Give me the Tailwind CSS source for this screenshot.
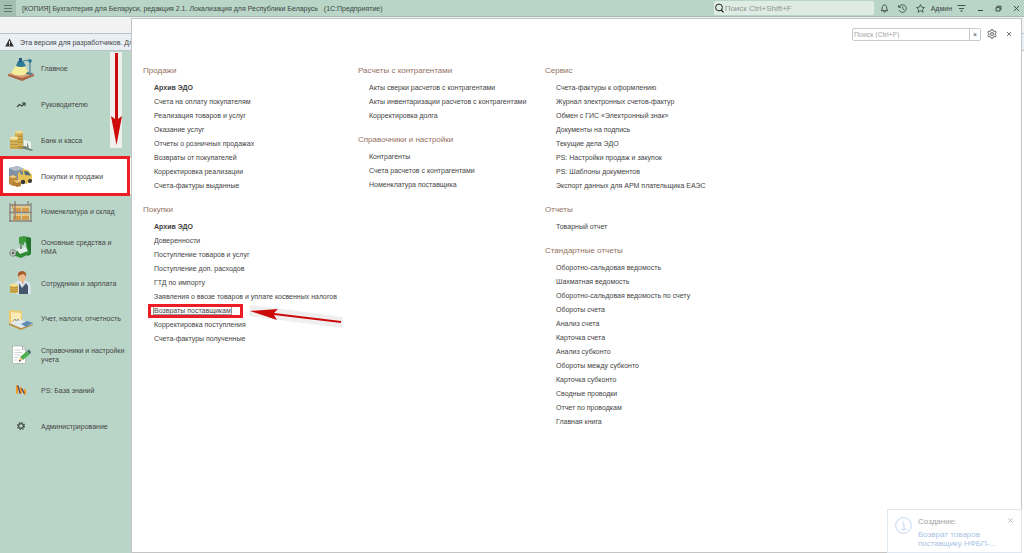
<!DOCTYPE html>
<html lang="ru">
<head>
  <meta charset="UTF-8">
  <meta name="viewport" content="width=device-width, initial-scale=1.0">
  <title>Бухгалтерия для Беларуси</title>
  <script src="https://cdn.jsdelivr.net/npm/@tailwindcss/browser@4"></script>
</head>
<body class="relative flex flex-col min-h-screen overflow-x-hidden bg-[#f2f2f2] font-['Liberation_Sans',Arial,sans-serif] text-[7px] leading-[9px] text-[#444]">

  <header class="flex items-center h-[17px] shrink-0 bg-[#b9d5c8] border-b border-[#a9b9b1] text-[#3c4541]">
    <button class="flex items-center justify-center w-4 h-4 bg-[#a3bfb1]" aria-label="Меню">
      <svg class="w-2 h-2" viewBox="0 0 8 8" stroke="#64756c" stroke-width="1"><path d="M0 1.5h8M0 4.5h8M0 7.5h8"/></svg>
    </button>
    <h1 class="ml-[6px] whitespace-pre">[КОПИЯ] Бухгалтерия для Беларуси, редакция 2.1. Локализация для Республики Беларусь   (1С:Предприятие)</h1>
    <label class="flex items-center ml-auto w-[160px] h-[14px] bg-[#dfece5] rounded-xs">
      <svg class="w-[10px] h-[10px] shrink-0" viewBox="0 0 10 10" fill="none" stroke="#222"><circle cx="5" cy="4.5" r="3.4"/><path d="M7.3 7l2.2 2.400" stroke-width="1.300"/></svg>
      <input type="text" class="w-full pl-px text-[8px] outline-none placeholder:text-[#8b9690]" placeholder="Поиск Ctrl+Shift+F" aria-label="Поиск">
    </label>
    <div class="flex items-center gap-[9px] ml-[6px]">
      <button aria-label="Уведомления"><svg class="w-[9px] h-[9px]" viewBox="0 0 9 9" fill="none" stroke="#34423b" stroke-width=".9"><path d="M1 6.700C2 6 2.200 5 2.300 3.500 2.400 1.800 3.200 1 4.500 1s2.100.8 2.200 2.500C6.800 5 7 6 8 6.700zM3.600 7.200a.9.9 0 0 0 1.800 0"/></svg></button>
      <button aria-label="История"><svg class="w-[9px] h-[9px]" viewBox="0 0 9 9" fill="none" stroke="#34423b" stroke-width=".8"><path d="M1 3a3.800 3.800 0 1 1 0 3M.6 1v2.300H3M4.700 2.300v2.500l1.800 1"/></svg></button>
      <button aria-label="Избранное"><svg class="w-[9px] h-[9px]" viewBox="0 0 9 9" fill="none" stroke="#34423b" stroke-width=".8" stroke-linejoin="round"><path d="M4.500.6l1.200 2.600 2.800.3-2.100 1.900.6 2.800-2.500-1.400L2 8.200l.6-2.800L.5 3.500l2.800-.3z"/></svg></button>
    </div>
    <button class="ml-[6px]">Админ</button>
    <button class="ml-[5px]" aria-label="Настройка"><svg class="w-[9px] h-[9px]" viewBox="0 0 9 9" fill="none" stroke="#34423b" stroke-width=".9"><path d="M.5 1.500h8M2 4.500h5"/><path d="M3 6.500h3L4.500 8z" fill="#34423b" stroke="none"/></svg></button>
    <div class="flex items-center gap-[11px] ml-[11px] mr-1">
      <button aria-label="Свернуть"><svg class="w-[7px] h-[7px]" viewBox="0 0 7 7" stroke="#34423b"><path d="M1 5.500h5"/></svg></button>
      <button aria-label="Развернуть"><svg class="w-[7px] h-[7px]" viewBox="0 0 7 7" fill="none" stroke="#34423b" stroke-width=".9"><path d="M2 2.500V1.200h4v3.200H5M1 2.700h4V6H1z"/></svg></button>
      <button aria-label="Закрыть"><svg class="w-[7px] h-[7px]" viewBox="0 0 7 7" stroke="#34423b" stroke-width=".9"><path d="M1 1l5 5M6 1L1 6"/></svg></button>
    </div>
  </header>

  <div class="flex flex-1">

    <!-- Разделы -->
    <aside class="flex flex-col w-[131px] shrink-0">
      <div class="h-4 bg-[#f2f2f2]"></div>
      <div class="flex items-center h-[18px] pl-[5px] gap-[6px] bg-[#e8eff5] border-y border-[#bcc2c6] whitespace-nowrap">
        <svg class="w-[9px] h-[9px] shrink-0" viewBox="0 0 9 9"><path d="M4.500.5L8.800 8.500H.2z" fill="#333"/><path d="M4.500 3v3M4.500 6.700v1" stroke="#fff" stroke-width=".9"/></svg>
        <p>Эта версия для разработчиков. Дл</p>
      </div>
      <div class="relative flex-1 bg-[#b9d5c8]">
        <nav class="grid auto-rows-fr h-[393px]">
          <a href="#" class="flex items-center pl-2 gap-[7px]">
            <svg class="w-[26px] h-6 shrink-0" viewBox="0 0 26 24"><path d="M0 17l13-5 13 5-12 6z" fill="#d9a07a"/><path d="M0 17l14 4 12-4v2l-12 5-14-5z" fill="#a8694a"/><path d="M9 7l-6 9q9 5 17 0L16 7z" fill="#f4ee9c"/><path d="M8 9l2-5h5l3 5q-5 2-10 0z" fill="#2f7898"/><path d="M11 1h3v4h-3z" fill="#245d7c"/><path d="M15 4l7-1v12" fill="none" stroke="#4e8296" stroke-width="1.200"/><circle cx="22" cy="4" r="1.800" fill="#2a7396"/><path d="M19 15l6 1-2 2-5-1z" fill="#487c8e"/></svg>
            <span>Главное</span>
          </a>
          <a href="#" class="flex items-center pl-2 gap-[7px]">
            <svg class="w-[26px] h-6 shrink-0" viewBox="0 0 26 24" fill="none" stroke="#3b443f" stroke-width="1.100"><path d="M9 14l2.500-2.500 2.500 1.500 3-3M14 10h3v3"/></svg>
            <span>Руководителю</span>
          </a>
          <a href="#" class="flex items-center pl-2 gap-[7px]">
            <svg class="w-[26px] h-6 shrink-0" viewBox="0 0 26 24"><path d="M7 4h8v15H7z" fill="#d0ab50"/><ellipse cx="11" cy="4" rx="4" ry="1.600" fill="#f1db93"/><path d="M2 10h8v11H2z" fill="#dab75b"/><path d="M2 13q4 2 8 0M2 16q4 2 8 0M2 19q4 2 8 0M10 8q3 1 5 0M10 11q3 1 5 0M10 14q3 1 5 0" fill="none" stroke="#9d7c2c" stroke-width=".7"/><ellipse cx="6" cy="10" rx="4" ry="1.600" fill="#f7e5a6"/><path d="M10 18h7v3h-7z" fill="#b99640"/><path d="M16 12l7 2v8l-7-4z" fill="#eef3ed"/><path d="M19 14l2 5-2 1z" fill="#76977f"/><path d="M13 20l4-2 8 4-1 1z" fill="#6c8175"/></svg>
            <span>Банк и касса</span>
          </a>
          <a href="#" class="relative flex items-center pl-2 gap-[7px] bg-white">
            <svg class="w-[26px] h-6 shrink-0" viewBox="0 0 26 24"><path d="M1 4l9-2 6 3v11H1z" fill="#8192a5"/><path d="M1 4l9-2 6 3-9 2z" fill="#b4bfcb"/><path d="M10 9l5-4 5 1 4 5v6l-6 3-8-4z" fill="#e6c354"/><path d="M16 7l4 .5 3 4-6-.5z" fill="#566e7c"/><path d="M12 7h3v4l-3-1z" fill="#738b96"/><circle cx="15" cy="18" r="2.200" fill="#353739"/><circle cx="22" cy="17" r="2" fill="#353739"/><path d="M1 13l4-2 4 2v8l-4 1-4-2z" fill="#c18b3e"/><path d="M1 13l4-2 4 2-4 1z" fill="#efcf88"/><path d="M5 17l4-1 4 2v4l-4 1-4-2z" fill="#b47e34"/><path d="M5 17l4-1 4 2-4 1z" fill="#e9c074"/></svg>
            <span>Покупки и продажи</span>
            <span class="absolute -inset-y-0.5 left-0 right-px border-3 border-[#ee1c25]"></span>
          </a>
          <a href="#" class="flex items-center pl-2 gap-[7px]">
            <svg class="w-[26px] h-6 shrink-0" viewBox="0 0 26 24"><path d="M4 5l4-2v4l-4 2zM5 6h8v6H5zM14 6h7v6h-7zM5 14h8v6H5zM14 14h7v6h-7z" fill="#d49b4b"/><path d="M5 6h8v2H5zM14 6h7v2h-7zM5 14h8v2H5zM14 14h7v2h-7z" fill="#edc27b"/><path d="M2 3v19M23 3v19M7 1v18M20 1v4M1 12.500h23M1 21h23M2 5h21" fill="none" stroke="#8d8277" stroke-width="1.300"/></svg>
            <span>Номенклатура и склад</span>
          </a>
          <a href="#" class="flex items-center pl-2 gap-[7px]">
            <svg class="w-[26px] h-6 shrink-0" viewBox="0 0 26 24"><path d="M11 2l5-1 7 2v16l-4 2-1-13-2-1v3l-5-1z" fill="#3c9a3d"/><path d="M18 2l5 1v16l-3 2z" fill="#23752b"/><path d="M10 15l8-2 5 5-10 5-8-3z" fill="#2f8a35"/><path d="M8 14l10-2 2 4-8 3z" fill="#dfeee5"/><path d="M12 8h2v6h-2z" fill="#77917c"/><circle cx="5" cy="18" r="3.200" fill="#bcc5bd" stroke="#58635b" stroke-dasharray="1.500 .8"/><circle cx="5" cy="18" r="1.200" fill="#56625a"/></svg>
            <span class="w-[74px]">Основные средства и НМА</span>
          </a>
          <a href="#" class="flex items-center pl-2 gap-[7px]">
            <svg class="w-[26px] h-6 shrink-0" viewBox="0 0 26 24"><path d="M7 12l5-3h4l6 3 1 11H8z" fill="#dbe5ef"/><path d="M11 12l3 5 4-5 2 3v8h-9z" fill="#44576f"/><path d="M13 9h3l-1 5z" fill="#dda77c"/><ellipse cx="14" cy="6" rx="3.600" ry="4.500" fill="#eebb8c"/><path d="M10 6q-1-6 4-6t4 6l-2-3-4 1z" fill="#a65a28"/><path d="M2 14h8v8H2z" fill="#dcb554"/><path d="M2 16q4 2 8 0M2 18q4 2 8 0M2 20q4 2 8 0" fill="none" stroke="#a17b2c" stroke-width=".7"/><ellipse cx="6" cy="14" rx="4" ry="1.500" fill="#f7df92"/></svg>
            <span>Сотрудники и зарплата</span>
          </a>
          <a href="#" class="flex items-center pl-2 gap-[7px]">
            <svg class="w-[26px] h-6 shrink-0" viewBox="0 0 26 24"><path d="M1 3l13 1v14L1 16z" fill="#edc96f"/><path d="M3 5l10 1v11L3 14z" fill="#faeab3"/><path d="M1 16l12-3 12 4-12 5z" fill="#dfe9ee"/><path d="M1 16l12 5 12-4v1l-12 5-12-5z" fill="#ba9342"/><path d="M13 17l6-3 6 2-7 4z" fill="#5e8db3"/><path d="M5 14l2-2 1 2 2-2 1 2" fill="none" stroke="#71869c" stroke-width=".8"/></svg>
            <span>Учет, налоги, отчетность</span>
          </a>
          <a href="#" class="flex items-center pl-2 gap-[7px]">
            <svg class="w-[26px] h-6 shrink-0" viewBox="0 0 26 24"><path d="M4.500 3h10l3 3v14.500h-13z" fill="#fff" stroke="#a9b4af" stroke-width=".8"/><path d="M14.500 3v3.500h3" fill="none" stroke="#97a29c" stroke-width=".8"/><path d="M6.500 7h6M6.500 9.500h8M6.500 12h6M6.500 14.500h4M6.500 17h3" stroke="#c3cac7" stroke-width=".8"/><path d="M12 14l7-6 3 3-7 6z" fill="#4fae4f"/><path d="M19 8l2-1.500L23 9l-1 2z" fill="#4a5e6e"/><path d="M12 14l3 3-4 1.500z" fill="#edbe7c"/><path d="M11.700 16.700l1.300 1.200-2.300.9z" fill="#333"/></svg>
            <span class="w-[84px]">Справочники и настройки учета</span>
          </a>
          <a href="#" class="flex items-center pl-2 gap-[7px]">
            <svg class="w-[26px] h-6 shrink-0" viewBox="0 0 26 24" fill="none" stroke-width="2" stroke-linecap="round"><path d="M9 8v7M13 10v5M17 12v4" stroke="#f39a21"/><path d="M10 8l2 7M14 11l2 4" stroke="#6a4a68" stroke-width="1.500"/></svg>
            <span>PS: База знаний</span>
          </a>
          <a href="#" class="flex items-center pl-2 gap-[7px]">
            <svg class="w-[26px] h-6 shrink-0" viewBox="0 0 26 24" fill="none" stroke="#46504a"><circle cx="13" cy="12" r="2.400" stroke-width="1.200"/><circle cx="13" cy="12" r="3.500" stroke-width="1.200" stroke-dasharray="1.400 1.350"/></svg>
            <span>Администрирование</span>
          </a>
        </nav>
        <svg class="absolute top-px left-[110px] w-3 h-24" viewBox="0 0 12 96"><path d="M0 0h12v96H0z" fill="#efefef"/><path d="M5 1h3v66l4-3-5.500 29L1 64l4 3z" fill="#cc0a0a"/></svg>
      </div>
    </aside>

    <!-- Меню раздела -->
    <main class="flex flex-col flex-1 mt-px bg-white border border-[#c4c4c4]">
      <div class="flex items-center justify-end h-[30px] pr-[9px]">
        <div class="flex h-[13px] w-[129px] border border-[#c9c9c9] rounded-xs">
          <input type="text" class="flex-1 min-w-0 pl-px outline-none placeholder:text-[#a5a5a5]" placeholder="Поиск (Ctrl+F)" aria-label="Поиск по меню">
          <button class="w-[11px] border-l border-[#c9c9c9]" aria-label="Очистить">×</button>
        </div>
        <button class="ml-[6px]" aria-label="Настройки"><svg class="w-[10px] h-[10px]" viewBox="0 0 10 10" fill="none" stroke="#555" stroke-width=".9"><circle cx="5" cy="5" r="1.500"/><path d="M4.200.7h1.600l.3 1.200 1 .5 1.200-.4.8 1.400-.9.8v1.500l.9.800-.8 1.400-1.200-.4-1 .5-.3 1.200H4.200L3.900 8l-1-.5-1.200.4-.8-1.400.9-.8V4.200l-.9-.8.8-1.400 1.200.4 1-.5z"/></svg></button>
        <button class="ml-[9px]" aria-label="Закрыть меню"><svg class="w-[6px] h-[6px]" viewBox="0 0 6 6" stroke="#666" stroke-width=".9"><path d="M1 1l4 4M5 1L1 5"/></svg></button>
      </div>

      <div class="flex pl-[11px] pt-4">
        <div class="w-[215px] shrink-0">
          <section>
            <h2 class="text-[8px] leading-3 text-[#93705f]">Продажи</h2>
            <ul class="mt-1 pl-[11px] leading-[14px]">
              <li><a href="#" class="font-bold">Архив ЭДО</a></li>
              <li><a href="#">Счета на оплату покупателям</a></li>
              <li><a href="#">Реализация товаров и услуг</a></li>
              <li><a href="#">Оказание услуг</a></li>
              <li><a href="#">Отчеты о розничных продажах</a></li>
              <li><a href="#">Возвраты от покупателей</a></li>
              <li><a href="#">Корректировка реализации</a></li>
              <li><a href="#">Счета-фактуры выданные</a></li>
            </ul>
          </section>
          <section class="mt-[11px]">
            <h2 class="text-[8px] leading-3 text-[#93705f]">Покупки</h2>
            <ul class="mt-1 pl-[11px] leading-[14px]">
              <li><a href="#" class="font-bold">Архив ЭДО</a></li>
              <li><a href="#">Доверенности</a></li>
              <li><a href="#">Поступление товаров и услуг</a></li>
              <li><a href="#">Поступление доп. расходов</a></li>
              <li><a href="#">ГТД по импорту</a></li>
              <li><a href="#">Заявления о ввозе товаров и уплате косвенных налогов</a></li>
              <li class="relative">
                <a href="#" class="outline outline-[#999]">Возвраты поставщикам</a>
                <span class="absolute -left-[6px] top-0 w-[95px] h-[14px] border-3 border-[#ee1c25]"></span>
                <svg class="absolute left-[94px] top-0 w-[96px] h-6" viewBox="0 0 96 24"><path d="M2 1l93 12-1 11L1 12z" fill="#efefef"/><path d="M2 7l28-2-4 4 67 8v2l-67-8 3 5z" fill="#cc0a0a"/></svg>
              </li>
              <li><a href="#">Корректировка поступления</a></li>
              <li><a href="#">Счета-фактуры полученные</a></li>
            </ul>
          </section>
        </div>

        <div class="w-[187px] shrink-0">
          <section>
            <h2 class="text-[8px] leading-3 text-[#93705f]">Расчеты с контрагентами</h2>
            <ul class="mt-1 pl-[11px] leading-[14px] whitespace-nowrap">
              <li><a href="#">Акты сверки расчетов с контрагентами</a></li>
              <li><a href="#">Акты инвентаризации расчетов с контрагентами</a></li>
              <li><a href="#">Корректировка долга</a></li>
            </ul>
          </section>
          <section class="mt-[11px]">
            <h2 class="text-[8px] leading-3 text-[#93705f]">Справочники и настройки</h2>
            <ul class="mt-1 pl-[11px] leading-[14px]">
              <li><a href="#">Контрагенты</a></li>
              <li><a href="#">Счета расчетов с контрагентами</a></li>
              <li><a href="#">Номенклатура поставщика</a></li>
            </ul>
          </section>
        </div>

        <div class="flex-1">
          <section>
            <h2 class="text-[8px] leading-3 text-[#93705f]">Сервис</h2>
            <ul class="mt-1 pl-[11px] leading-[14px]">
              <li><a href="#">Счета-фактуры к оформлению</a></li>
              <li><a href="#">Журнал электронных счетов-фактур</a></li>
              <li><a href="#">Обмен с ГИС «Электронный знак»</a></li>
              <li><a href="#">Документы на подпись</a></li>
              <li><a href="#">Текущие дела ЭДО</a></li>
              <li><a href="#">PS: Настройки продаж и закупок</a></li>
              <li><a href="#">PS: Шаблоны документов</a></li>
              <li><a href="#">Экспорт данных для АРМ плательщика ЕАЭС</a></li>
            </ul>
          </section>
          <section class="mt-[11px]">
            <h2 class="text-[8px] leading-3 text-[#93705f]">Отчеты</h2>
            <ul class="mt-1 pl-[11px] leading-[14px]">
              <li><a href="#">Товарный отчет</a></li>
            </ul>
          </section>
          <section class="mt-[11px]">
            <h2 class="text-[8px] leading-3 text-[#93705f]">Стандартные отчеты</h2>
            <ul class="mt-1 pl-[11px] leading-[14px]">
              <li><a href="#">Оборотно-сальдовая ведомость</a></li>
              <li><a href="#">Шахматная ведомость</a></li>
              <li><a href="#">Оборотно-сальдовая ведомость по счету</a></li>
              <li><a href="#">Обороты счета</a></li>
              <li><a href="#">Анализ счета</a></li>
              <li><a href="#">Карточка счета</a></li>
              <li><a href="#">Анализ субконто</a></li>
              <li><a href="#">Обороты между субконто</a></li>
              <li><a href="#">Карточка субконто</a></li>
              <li><a href="#">Сводные проводки</a></li>
              <li><a href="#">Отчет по проводкам</a></li>
              <li><a href="#">Главная книга</a></li>
            </ul>
          </section>
        </div>
      </div>
    </main>

    <div class="w-0.5 shrink-0 bg-white">
      <div class="h-4 bg-[#f2f2f2]"></div>
      <div class="h-[18px] bg-[#e8eff5] border-y border-[#bcc2c6]"></div>
    </div>
  </div>

  <!-- Всплывающее уведомление -->
  <div class="absolute bottom-0 right-0.5 flex w-[135px] h-11 pl-[7px] pt-[7px] border border-[#dfe8f0] bg-white/80 text-[8px]">
    <svg class="w-[17px] h-[17px] shrink-0" viewBox="0 0 17 17" fill="none" stroke="#b9d0ec" stroke-width=".9"><circle cx="8.500" cy="8.500" r="7.800"/><path d="M7 7h2v5.500M6.500 12.500h5M8.300 4v1.300"/></svg>
    <div class="ml-[6px] flex-1">
      <p class="text-[#a3a3a3]">Создание:</p>
      <a href="#" class="block mt-1 w-[84px] text-[#a9c3e6]">Возврат товаров поставщику НФБП-...</a>
    </div>
    <button class="absolute top-2 right-2" aria-label="Закрыть уведомление"><svg class="w-[5px] h-[5px]" viewBox="0 0 5 5" stroke="#aaa" stroke-width=".8"><path d="M.5.5l4 4M4.500.5l-4 4"/></svg></button>
  </div>
</body>
</html>
